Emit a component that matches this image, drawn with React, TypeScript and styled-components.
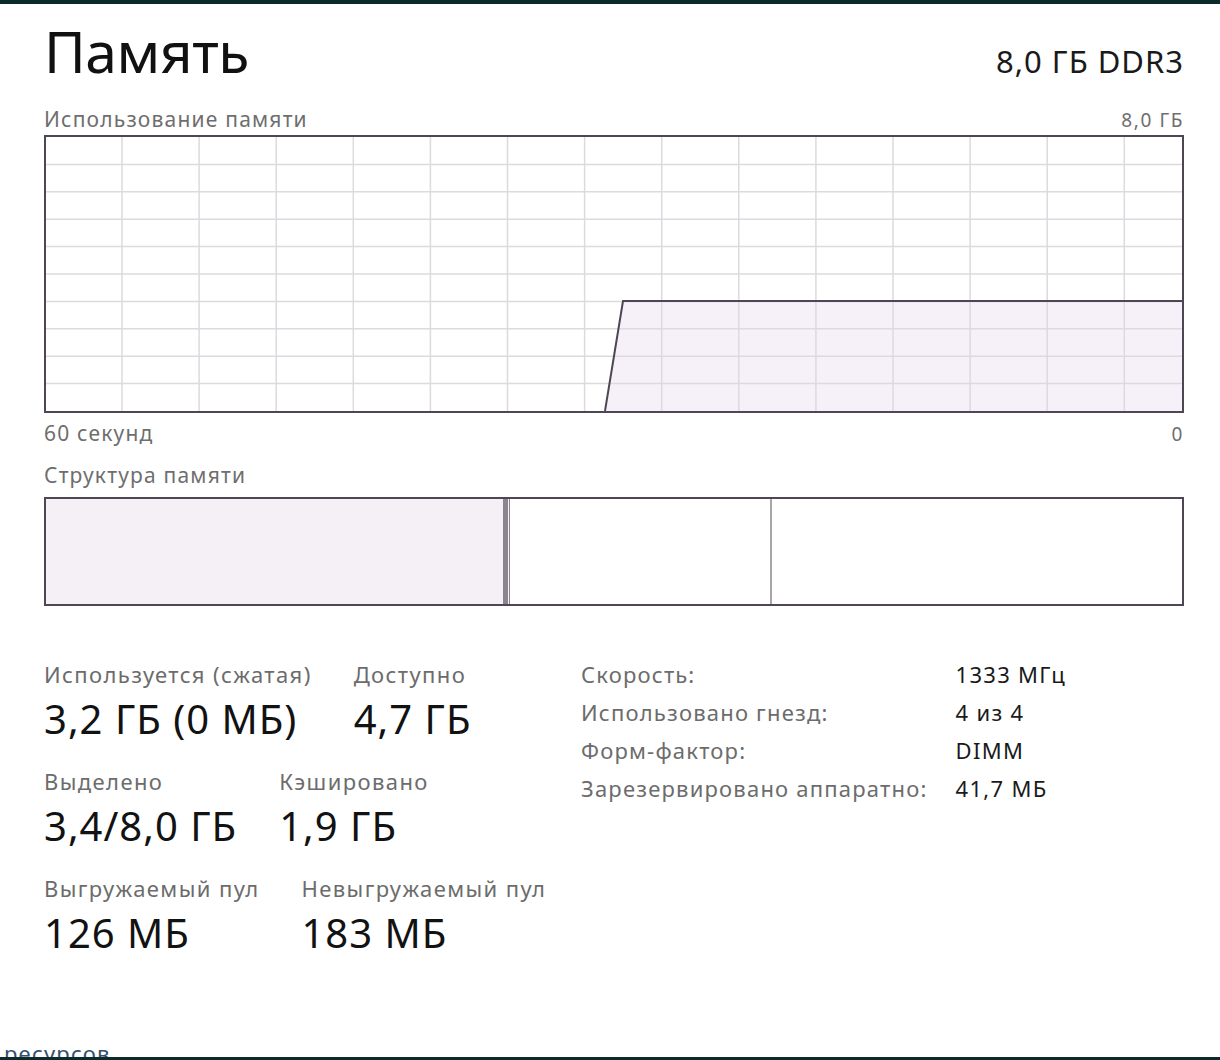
import { Fragment } from 'react';
import { createGlobalStyle, styled } from 'styled-components';

type Stat = { label: string; value: string };

const statRows: Stat[][] = [
  [
    { label: 'Используется (сжатая)', value: '3,2 ГБ (0 МБ)' },
    { label: 'Доступно', value: '4,7 ГБ' },
  ],
  [
    { label: 'Выделено', value: '3,4/8,0 ГБ' },
    { label: 'Кэшировано', value: '1,9 ГБ' },
  ],
  [
    { label: 'Выгружаемый пул', value: '126 МБ' },
    { label: 'Невыгружаемый пул', value: '183 МБ' },
  ],
];

const details: Stat[] = [
  { label: 'Скорость:', value: '1333 МГц' },
  { label: 'Использовано гнезд:', value: '4 из 4' },
  { label: 'Форм-фактор:', value: 'DIMM' },
  { label: 'Зарезервировано аппаратно:', value: '41,7 МБ' },
];

// widths of the composition bar segments, in px of the inner bar
type Segment = { width: number; fill: string; line: string; double?: boolean };

const segments: Segment[] = [
  { width: 459, fill: '#f4f0f6', line: '#8a8590' },
  { width: 5, fill: '#f4f0f6', line: '#8a8590', double: true },
  { width: 262, fill: '#ffffff', line: '#a8a6ab' },
  { width: 410, fill: '#ffffff', line: 'transparent' },
];

const GRAPH_W = 1136;
const GRAPH_H = 274;

const GlobalStyle = createGlobalStyle`
  html, body {
    margin: 0;
    padding: 0;
    background: #ffffff;
  }
  body {
    font-family: "Noto Sans", "Open Sans", "DejaVu Sans", sans-serif;
  }
`;

const StyledWindow = styled.div`
  box-sizing: border-box;
  width: 1220px;
  height: 1060px;
  display: flex;
  flex-direction: column;
  overflow: hidden;
  background: #ffffff;
`;

const StyledEdge = styled.div<{ $size: number }>`
  flex: 0 0 ${({ $size }) => $size}px;
  background: #0c2a2c;
`;

const StyledContent = styled.main`
  flex: 1;
  padding: 0 36px 0 44px;
  display: flex;
  flex-direction: column;
`;

const StyledHeader = styled.header`
  display: flex;
  justify-content: space-between;
  align-items: baseline;
  margin-top: 14px;
  height: 86px;
`;

const StyledTitle = styled.h1`
  margin: 0;
  font-size: 57px;
  font-weight: 400;
  line-height: 66px;
  color: #111111;
  letter-spacing: -0.5px;
`;

const StyledKind = styled.div`
  font-size: 31px;
  line-height: 66px;
  color: #1a1a1a;
  letter-spacing: 1px;
`;

const StyledCaptionRow = styled.div<{ $top?: number; $bottom?: number }>`
  display: flex;
  justify-content: space-between;
  align-items: baseline;
  padding: ${({ $top = 0, $bottom = 0 }) => `${$top}px 0 ${$bottom}px`};
  line-height: 30px;
  font-size: 21px;
  letter-spacing: 1.2px;
  color: #6e6e6e;
`;

const StyledSmallCaption = styled.span`
  font-size: 19px;
  letter-spacing: 1.6px;
`;

const StyledGraphFrame = styled.div`
  height: 278px;
  border: 2px solid #4e4654;
  box-sizing: border-box;
  background: #ffffff;

  svg {
    display: block;
  }
`;

const StyledBar = styled.div`
  margin-top: 7px;
  height: 109px;
  box-sizing: border-box;
  border: 2px solid #4e4654;
  display: flex;
`;

const StyledSegment = styled.div<{ $fill: string; $line: string; $double?: boolean }>`
  box-sizing: border-box;
  height: 100%;
  background: ${({ $fill }) => $fill};
  border-right: ${({ $double }) => ($double ? '3px double' : '2px solid')} ${({ $line }) => $line};
  border-left: ${({ $double, $line }) => ($double ? `2px solid ${$line}` : 'none')};

  &:last-child {
    flex: 1;
    border-right: none;
  }
`;

const StyledStats = styled.section`
  margin-top: 54px;
  display: flex;
`;

const StyledStatBlock = styled.div`
  width: 537px;
  display: flex;
  flex-direction: column;
`;

const StyledStatRow = styled.div`
  display: flex;
  gap: 42px;
  height: 107px;
`;

const StyledStat = styled.div`
  display: flex;
  flex-direction: column;
`;

const StyledStatLabel = styled.div`
  font-size: 22px;
  line-height: 28px;
  letter-spacing: 1.4px;
  color: #6c6c6c;
  white-space: nowrap;
`;

const StyledStatValue = styled.div`
  margin-top: 5px;
  font-size: 40px;
  line-height: 52px;
  color: #121212;
  white-space: nowrap;
  letter-spacing: 1px;
`;

const StyledDetails = styled.dl`
  margin: 0;
  display: grid;
  grid-template-columns: max-content max-content;
  column-gap: 28px;
  grid-auto-rows: 38px;
  align-content: start;
`;

const StyledDetailLabel = styled.dt`
  font-size: 22px;
  line-height: 28px;
  letter-spacing: 1.2px;
  color: #6c6c6c;
  white-space: nowrap;
`;

const StyledDetailValue = styled.dd`
  margin: 0;
  font-size: 22px;
  line-height: 28px;
  letter-spacing: 1.3px;
  color: #1a1a1a;
  white-space: nowrap;
`;

const StyledFooter = styled.footer`
  height: 16px;
  padding-left: 4px;
  overflow: hidden;
  font-size: 22px;
  line-height: 24px;
  letter-spacing: 1.2px;
  color: #34506d;
`;

const MemoryGraph = () => {
  const columns = Array.from({ length: 14 }, (_, i) => 76 + i * 77.1);
  const rows = Array.from({ length: 9 }, (_, i) => (i + 1) * (GRAPH_H / 10));
  const area = `559,${GRAPH_H} 577,164 ${GRAPH_W},164 ${GRAPH_W},${GRAPH_H}`;

  return (
    <svg width={GRAPH_W} height={GRAPH_H} viewBox={`0 0 ${GRAPH_W} ${GRAPH_H}`}>
      <polygon points={area} fill="#f6f0f9" />
      {rows.map((y) => (
        <line key={`r${y}`} x1={0} x2={GRAPH_W} y1={y} y2={y} stroke="#dcdade" strokeWidth={1.5} />
      ))}
      {columns.map((x) => (
        <line key={`c${x}`} x1={x} x2={x} y1={0} y2={GRAPH_H} stroke="#dcdade" strokeWidth={1.5} />
      ))}
      <polyline
        points={`559,${GRAPH_H} 577,164 ${GRAPH_W},164`}
        fill="none"
        stroke="#4e4654"
        strokeWidth={2}
      />
    </svg>
  );
};

export default function App() {
  return (
    <>
      <GlobalStyle />
      <StyledWindow>
        <StyledEdge $size={4} />
        <StyledContent>
          <StyledHeader>
            <StyledTitle>Память</StyledTitle>
            <StyledKind>8,0 ГБ DDR3</StyledKind>
          </StyledHeader>
          <StyledCaptionRow>
            <span>Использование памяти</span>
            <StyledSmallCaption>8,0 ГБ</StyledSmallCaption>
          </StyledCaptionRow>
          <StyledGraphFrame>
            <MemoryGraph />
          </StyledGraphFrame>
          <StyledCaptionRow $top={5} $bottom={11}>
            <span>60 секунд</span>
            <StyledSmallCaption>0</StyledSmallCaption>
          </StyledCaptionRow>
          <StyledCaptionRow>
            <span>Структура памяти</span>
          </StyledCaptionRow>
          <StyledBar>
            {segments.map((s, i) => (
              <StyledSegment
                key={i}
                $fill={s.fill}
                $line={s.line}
                $double={s.double}
                style={{ width: s.width }}
              />
            ))}
          </StyledBar>
          <StyledStats>
            <StyledStatBlock>
              {statRows.map((row, i) => (
                <StyledStatRow key={i}>
                  {row.map((stat) => (
                    <StyledStat key={stat.label}>
                      <StyledStatLabel>{stat.label}</StyledStatLabel>
                      <StyledStatValue>{stat.value}</StyledStatValue>
                    </StyledStat>
                  ))}
                </StyledStatRow>
              ))}
            </StyledStatBlock>
            <StyledDetails>
              {details.map((d) => (
                <Fragment key={d.label}>
                  <StyledDetailLabel>{d.label}</StyledDetailLabel>
                  <StyledDetailValue>{d.value}</StyledDetailValue>
                </Fragment>
              ))}
            </StyledDetails>
          </StyledStats>
        </StyledContent>
        <StyledFooter>ресурсов</StyledFooter>
        <StyledEdge $size={3} />
      </StyledWindow>
    </>
  );
}
